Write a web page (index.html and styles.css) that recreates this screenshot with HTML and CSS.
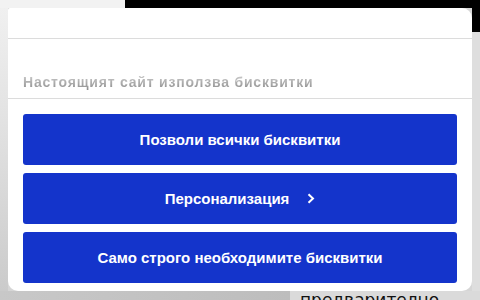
FILE: index.html
```html
<!DOCTYPE html>
<html lang="bg">
<head>
<meta charset="utf-8">
<title>Бисквитки</title>
<link rel="stylesheet" href="styles.css">
</head>
<body>
<div class="top-strip">
  <div class="top-light"></div>
  <div class="top-dark"></div>
</div>
<div class="middle">
  <div class="side side-left"></div>
  <div class="modal">
    <div class="modal-header"></div>
    <div class="modal-body">
      <p class="intro">Настоящият сайт използва бисквитки</p>
    </div>
    <div class="modal-actions">
      <button class="btn">Позволи всички бисквитки</button>
      <button class="btn">Персонализация
        <svg class="chev" width="8" height="11" viewBox="0 0 8 11"><path d="M1.5 1.2 L6 5.5 L1.5 9.8" fill="none" stroke="#fff" stroke-width="2"/></svg>
      </button>
      <button class="btn">Само строго необходимите бисквитки</button>
    </div>
  </div>
  <div class="side side-right">
    <div class="side-right-dark"></div>
  </div>
</div>
<div class="bottom-strip">
  <div class="bottom-left"></div>
  <div class="bottom-right"><span class="behind-text">предварително</span></div>
</div>
</body>
</html>
```
FILE: styles.css
```css
html, body {
  margin: 0;
  padding: 0;
}
body {
  width: 480px;
  height: 300px;
  overflow: hidden;
  background: #d6d6d6;
  font-family: "Liberation Sans", Arial, sans-serif;
  display: flex;
  flex-direction: column;
}
.top-strip {
  display: flex;
  height: 8px;
  flex: none;
}
.top-light {
  width: 125px;
  background: #f2f2f2;
}
.top-dark {
  flex: 1;
  background: #000;
}
.middle {
  display: flex;
  height: 283px;
  flex: none;
}
.side {
  width: 8px;
  flex: none;
}
.side-left {
  background: linear-gradient(to bottom, #f0f0f0 0%, #e2e2e2 40%, #cbcbcb 100%);
}
.side-right {
  background: #dedede;
  display: flex;
  flex-direction: column;
}
.side-right-dark {
  height: 24px;
  background: #000;
}
.modal {
  flex: 1;
  background: #fff;
  border-radius: 2px 10px 10px 10px;
  display: flex;
  flex-direction: column;
}
.modal-header {
  height: 30px;
  border-bottom: 1px solid #dcdcdc;
  flex: none;
}
.modal-body {
  height: 60px;
  border-bottom: 1px solid #dcdcdc;
  flex: none;
  box-sizing: border-box;
  padding: 34px 15px 0;
}
.intro {
  margin: 0;
  font-size: 14px;
  line-height: 16px;
  font-weight: bold;
  letter-spacing: 0.8px;
  color: #a0a0a0;
  background: linear-gradient(to bottom, #d0d0d0, #8e8e8e);
  -webkit-background-clip: text;
  background-clip: text;
  -webkit-text-fill-color: transparent;
  display: inline-block;
}
.modal-actions {
  display: flex;
  flex-direction: column;
  gap: 8px;
  padding: 15px 15px 8px;
}
.btn {
  height: 51px;
  border: 0;
  border-radius: 3px;
  background: #1434cb;
  color: #fff;
  font-family: "Liberation Sans", Arial, sans-serif;
  font-weight: bold;
  font-size: 15px;
  display: flex;
  align-items: center;
  justify-content: center;
  gap: 18px;
  padding: 0;
}
.chev {
  display: block;
}
.bottom-strip {
  display: flex;
  height: 9px;
  flex: none;
}
.bottom-left {
  width: 290px;
  background: linear-gradient(to right, #c8c8c8, #bdbdbd);
}
.bottom-right {
  flex: 1;
  background: #dadada;
  padding-left: 10px;
  overflow: hidden;
}
.behind-text {
  display: block;
  font-family: "DejaVu Sans", sans-serif;
  font-size: 17px;
  line-height: 20px;
  color: #111;
  margin-top: -1px;
}
```
